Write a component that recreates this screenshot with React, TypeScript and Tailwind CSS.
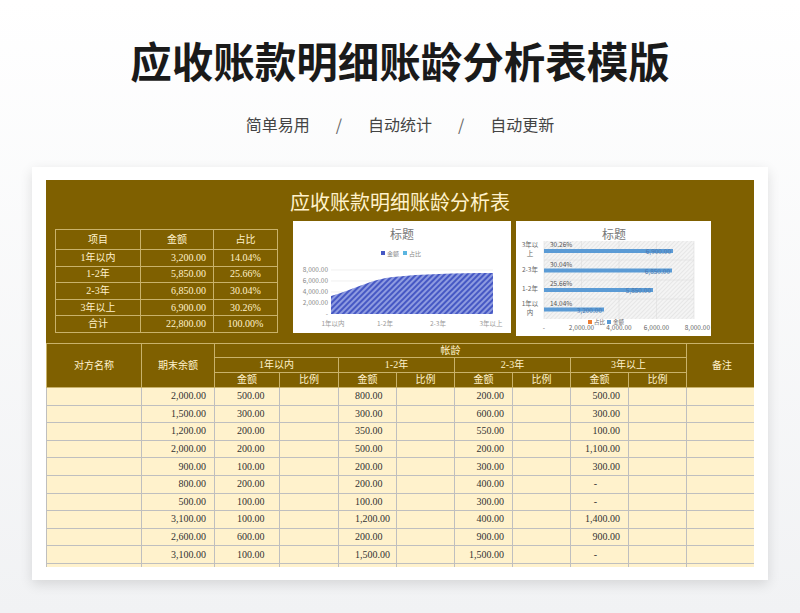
import React from "react";

const serif = { fontFamily: '"Liberation Serif","Noto Sans CJK SC",serif' };
const rows = [
  ["2,000.00", "500.00", "800.00", "200.00", "500.00"],
  ["1,500.00", "300.00", "300.00", "600.00", "300.00"],
  ["1,200.00", "200.00", "350.00", "550.00", "100.00"],
  ["2,000.00", "200.00", "500.00", "200.00", "1,100.00"],
  ["900.00", "100.00", "200.00", "300.00", "300.00"],
  ["800.00", "200.00", "200.00", "400.00", "-"],
  ["500.00", "100.00", "100.00", "300.00", "-"],
  ["3,100.00", "100.00", "1,200.00", "400.00", "1,400.00"],
  ["2,600.00", "600.00", "200.00", "900.00", "900.00"],
  ["3,100.00", "100.00", "1,500.00", "1,500.00", "-"],
  ["", "", "", "", ""],
];
const summary = [
  ["1年以内", "3,200.00", "14.04%"],
  ["1-2年", "5,850.00", "25.66%"],
  ["2-3年", "6,850.00", "30.04%"],
  ["3年以上", "6,900.00", "30.26%"],
  ["合计", "22,800.00", "100.00%"],
];

function Chart1() {
  return (
    <svg width="218" height="112" viewBox="0 0 218 112" style={{ fontFamily: '"Noto Sans CJK SC",sans-serif' }}>
      <defs>
        <pattern id="hatch" width="4" height="4" patternUnits="userSpaceOnUse" patternTransform="rotate(45)">
          <rect width="4" height="4" fill="#8e9be0" />
          <rect width="2" height="4" fill="#4658c4" />
        </pattern>
      </defs>
      <rect width="218" height="112" fill="#fff" />
      <text x="109" y="18" textAnchor="middle" fontSize="12" fill="#777">标题</text>
      <rect x="88" y="30" width="4" height="4" fill="#4658c4" />
      <text x="94" y="35" fontSize="6" fill="#888">金额</text>
      <rect x="110" y="30" width="4" height="4" fill="#5bb5e0" />
      <text x="116" y="35" fontSize="6" fill="#888">占比</text>
      {[49, 60, 71, 82].map((y) => (
        <line key={y} x1="38" x2="200" y1={y} y2={y} stroke="#e5e5e5" strokeWidth="0.6" />
      ))}
      {["8,000.00", "6,000.00", "4,000.00", "2,000.00"].map((t, i) => (
        <text key={t} x="35" y={51 + i * 11} fontSize="6.5" fill="#888" textAnchor="end">{t}</text>
      ))}
      <text x="35" y="95" fontSize="6.5" fill="#888" textAnchor="end">-</text>
      <path d="M38 75 C70 65 80 58 100 56 C130 53 160 52 200 52 L200 93 L38 93 Z" fill="url(#hatch)" />
      {[["1年以内", 40], ["1-2年", 92], ["2-3年", 145], ["3年以上", 198]].map(([t, x]) => (
        <text key={t as string} x={x as number} y="105" fontSize="6.5" fill="#999" textAnchor="middle">{t}</text>
      ))}
    </svg>
  );
}

function Chart2() {
  const bars = [
    ["3年以", "上", "30.26%", "6,900.00", 129],
    ["2-3年", "", "30.04%", "6,850.00", 128],
    ["1-2年", "", "25.66%", "5,850.00", 109],
    ["1年以", "内", "14.04%", "3,200.00", 60],
  ] as const;
  const xs = [28, 65.5, 103, 140.5, 178];
  return (
    <svg width="195" height="115" viewBox="0 0 195 115" style={{ fontFamily: '"Noto Sans CJK SC",sans-serif' }}>
      <defs>
        <pattern id="dots" width="3" height="3" patternUnits="userSpaceOnUse" patternTransform="rotate(45)">
          <rect width="3" height="3" fill="#f4f4f4" />
          <rect width="1" height="3" fill="#e6e6e6" />
        </pattern>
      </defs>
      <rect width="195" height="115" fill="#fff" />
      <rect x="28" y="20" width="150" height="78" fill="url(#dots)" />
      {xs.map((x) => (
        <line key={x} x1={x} x2={x} y1="20" y2="98" stroke="#ddd" strokeWidth="0.6" />
      ))}
      {[39, 59, 78].map((y) => (
        <line key={y} x1="28" x2="178" y1={y} y2={y} stroke="#ddd" strokeWidth="0.6" />
      ))}
      <text x="98" y="18" textAnchor="middle" fontSize="12" fill="#777">标题</text>
      {bars.map(([a, b, p, v, w], i) => {
        const y = 29 + i * 19.5;
        return (
          <g key={a}>
            <text x="14" y={b ? y - 3 : y + 2} fontSize="6.5" fill="#666" textAnchor="middle">{a}</text>
            {b && <text x="14" y={y + 6} fontSize="6.5" fill="#666" textAnchor="middle">{b}</text>}
            <rect x="28" y={y - 1} width={w} height="4" fill="#5b9bd5" />
            <text x="34" y={y - 3} fontSize="6.5" fill="#555">{p}</text>
            <text x={28 + w - 2} y={y + 4} fontSize="6.5" fill="#4a78b0" textAnchor="end">{v}</text>
          </g>
        );
      })}
      <text x="28" y="109" fontSize="6.5" fill="#666" textAnchor="middle">-</text>
      {["2,000.00", "4,000.00", "6,000.00", "8,000.00"].map((t, i) => (
        <text key={t} x={i === 3 ? 194 : xs[i + 1]} y="109" fontSize="6.5" fill="#666" textAnchor={i === 3 ? "end" : "middle"}>{t}</text>
      ))}
      <rect x="72" y="99" width="4" height="4" fill="#ed7d31" />
      <text x="78" y="103" fontSize="5.5" fill="#666">占比</text>
      <rect x="91" y="99" width="4" height="4" fill="#5b9bd5" />
      <text x="97" y="103" fontSize="5.5" fill="#666">金额</text>
    </svg>
  );
}

export default function App() {
  const hd = "border border-[#c9b26a] text-[#fff2cc] font-normal text-[10px] leading-none p-0";
  const td = "border border-[#bfbfbf] text-[10px] text-[#333] text-right pr-2 h-[17.6px] p-0 leading-none";
  return (
    <div className="w-[800px] h-[613px] overflow-hidden bg-gradient-to-b from-white to-[#f1f2f4] flex flex-col items-center">
      <h1 className="mt-[36px] text-[41.5px] leading-[48px] font-bold text-[#1a1a1a]" style={{ fontFamily: '"Noto Sans CJK SC",sans-serif' }}>
        应收账款明细账龄分析表模版
      </h1>
      <div className="mt-[28px] flex gap-[26px] text-[16px] text-[#444] leading-[24px]" style={{ fontFamily: '"Noto Sans CJK SC",sans-serif' }}>
        <span>简单易用</span><span className="text-[#666]">/</span><span>自动统计</span><span className="text-[#666]">/</span><span>自动更新</span>
      </div>
      <div className="mt-[31px] w-[736px] h-[413px] bg-white shadow-[0_4px_12px_rgba(0,0,0,0.12)] pt-[13px] px-[14px]">
        <div className="h-[387px] overflow-hidden" style={serif}>
          <div className="h-[163px] bg-[#7f6000] relative">
            <div className="text-center text-[20px] text-[#fff2cc] pt-[10px] leading-[26px]">应收账款明细账龄分析表</div>
            <table className="absolute left-[9px] top-[49px] border-collapse w-[223px] text-[#fff2cc] text-[10px]">
              <tbody>
                <tr className="h-[20px]">
                  <td className="border border-[#c9b26a] text-center w-[85px]">项目</td>
                  <td className="border border-[#c9b26a] text-center w-[73px]">金额</td>
                  <td className="border border-[#c9b26a] text-center">占比</td>
                </tr>
                {summary.map((r) => (
                  <tr key={r[0]} className="h-[16.6px]">
                    <td className="border border-[#c9b26a] text-center leading-none">{r[0]}</td>
                    <td className="border border-[#c9b26a] text-right pr-[7px] leading-none">{r[1]}</td>
                    <td className="border border-[#c9b26a] text-center leading-none">{r[2]}</td>
                  </tr>
                ))}
              </tbody>
            </table>
            <div className="absolute left-[247px] top-[41px]"><Chart1 /></div>
            <div className="absolute left-[470px] top-[41px]"><Chart2 /></div>
          </div>
          <table className="border-collapse table-fixed w-[711px] bg-[#fff2cc]">
            <colgroup>
              {[95, 73, 65, 59, 58, 58, 58, 58, 58, 58, 71].map((w, i) => <col key={i} style={{ width: w }} />)}
            </colgroup>
            <thead className="bg-[#7f6000]">
              <tr className="h-[14px]">
                <th rowSpan={3} className={hd}>对方名称</th>
                <th rowSpan={3} className={hd}>期末余额</th>
                <th colSpan={8} className={hd}>帐龄</th>
                <th rowSpan={3} className={hd}>备注</th>
              </tr>
              <tr className="h-[15px]">
                {["1年以内", "1-2年", "2-3年", "3年以上"].map((t) => (
                  <th key={t} colSpan={2} className={hd}>{t}</th>
                ))}
              </tr>
              <tr className="h-[15px]">
                {[0, 1, 2, 3].flatMap((i) => [
                  <th key={i + "a"} className={hd}>金额</th>,
                  <th key={i + "b"} className={hd}>比例</th>,
                ])}
              </tr>
            </thead>
            <tbody>
              {rows.map((r, i) => (
                <tr key={i}>
                  <td className={td}></td>
                  <td className={td}>{r[0]}</td>
                  <td className={td + " !text-left pl-[22px]"}>{r[1]}</td>
                  <td className={td}></td>
                  <td className={td + " !text-left pl-[16px]"}>{r[2]}</td>
                  <td className={td}></td>
                  <td className={td}>{r[3]}</td>
                  <td className={td}></td>
                  <td className={td + (r[4] === "-" ? " !text-center" : "")}>{r[4]}</td>
                  <td className={td}></td>
                  <td className={td}></td>
                </tr>
              ))}
            </tbody>
          </table>
        </div>
      </div>
    </div>
  );
}
